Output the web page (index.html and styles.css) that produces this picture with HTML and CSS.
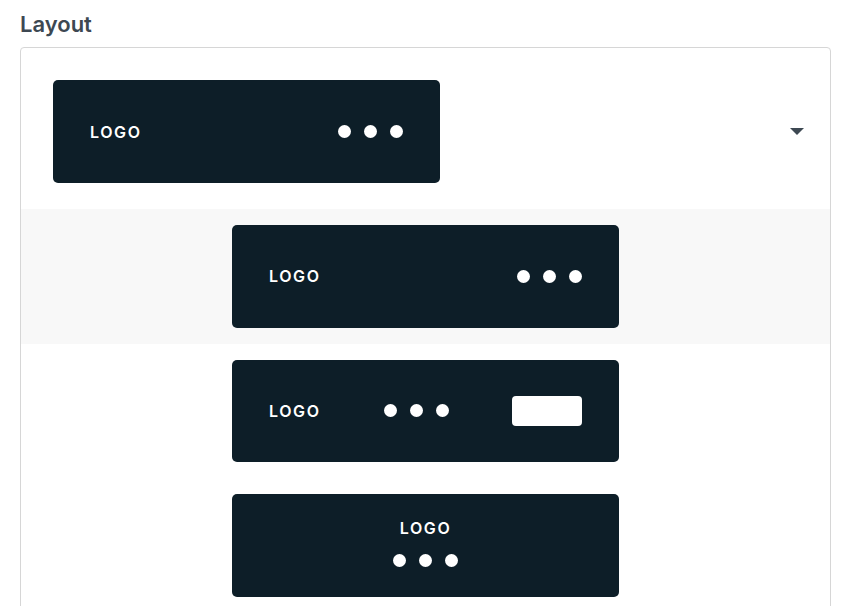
FILE: index.html
```html
<!DOCTYPE html>
<html>
<head>
    <title>Layout</title>
    <link rel="stylesheet" href="styles.css">
</head>
<body>
    <h2 class="title">Layout</h2>
    <div class="picker">
        <div class="current">
            <div class="bar">
                <span class="logo">LOGO</span>
                <span class="dots"><i></i><i></i><i></i></span>
            </div>
            <svg class="caret" width="14" height="8" viewBox="0 0 14 8">
                <path d="M0 0 H14 L7 7 Z" fill="#3d4852"/>
            </svg>
        </div>
        <div class="options">
            <div class="option active">
                <div class="bar">
                    <span class="logo">LOGO</span>
                    <span class="dots"><i></i><i></i><i></i></span>
                </div>
            </div>
            <div class="option">
                <div class="bar">
                    <span class="logo">LOGO</span>
                    <span class="dots"><i></i><i></i><i></i></span>
                    <span class="btn"></span>
                </div>
            </div>
            <div class="option">
                <div class="bar stacked">
                    <span class="logo">LOGO</span>
                    <span class="dots"><i></i><i></i><i></i></span>
                </div>
            </div>
        </div>
    </div>
</body>
</html>
```

FILE: styles.css
```css
body {
    margin: 0;
    padding: 10px 23px 0 20px;
    background: #ffffff;
    font-family: Inter, "Liberation Sans", sans-serif;
    overflow: hidden;
}

.title {
    margin: 0 0 9px 0;
    color: #3d4852;
    font-size: 22px;
    font-weight: 600;
    line-height: 28px;
}

.picker {
    border: 1px solid #d6d6d6;
    border-radius: 4px;
    height: 700px;
}

.current {
    display: flex;
    align-items: center;
    justify-content: space-between;
    padding: 32px 26px 26px 32px;
}

.caret {
    display: block;
}

.option {
    display: flex;
    justify-content: center;
    padding: 16px 0;
}

.option.active {
    background: #f8f8f8;
}

.bar {
    box-sizing: border-box;
    width: 387px;
    height: 103px;
    padding: 0 37px;
    background: #0d1e28;
    border-radius: 5px;
    display: flex;
    align-items: center;
    justify-content: space-between;
}

.option .bar {
    height: 102.5px;
}

.bar.stacked {
    flex-direction: column;
    justify-content: center;
    gap: 16px;
    padding-bottom: 5px;
}

.logo {
    color: #ffffff;
    font-size: 16px;
    font-weight: 600;
    letter-spacing: 1.6px;
    line-height: 20px;
}

.dots {
    display: flex;
    gap: 13px;
}

.dots i {
    display: block;
    width: 13px;
    height: 13px;
    border-radius: 50%;
    background: #ffffff;
}

.btn {
    display: block;
    width: 70px;
    height: 30px;
    border-radius: 4px;
    background: #ffffff;
}
```
